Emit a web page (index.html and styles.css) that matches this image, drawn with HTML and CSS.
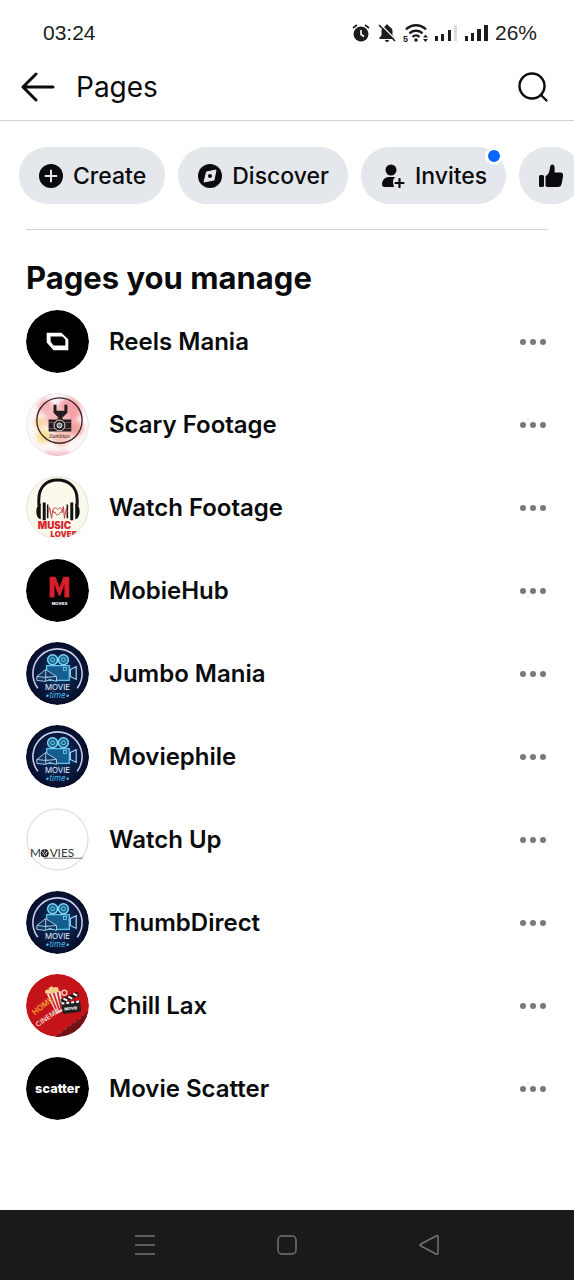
FILE: index.html
```html
<!DOCTYPE html>
<html lang="en">
<head>
    <meta charset="UTF-8">
    <meta name="viewport" content="width=device-width, initial-scale=1.0">
    <title>Pages</title>
    <link rel="stylesheet" href="styles.css">
</head>
<body>
    <svg class="sprite" aria-hidden="true">
        <defs>
            <radialGradient id="night">
                <stop offset="0" stop-color="#10426e"/>
                <stop offset="0.6" stop-color="#0a1c44"/>
                <stop offset="1" stop-color="#070d28"/>
            </radialGradient>
        </defs>
        <symbol id="dots" viewBox="0 0 28 8">
            <circle cx="4" cy="4" r="3"/><circle cx="14" cy="4" r="3"/><circle cx="24" cy="4" r="3"/>
        </symbol>
        <symbol id="movie-time" viewBox="0 0 64 64">
            <circle cx="32" cy="32" r="32" fill="url(#night)"/>
            <path d="M12 47A25 25 0 1 1 52 47" fill="none" stroke="#c9cdec" stroke-width="1.6"/>
            <rect x="21" y="24" width="23" height="15" fill="#155d8f" stroke="#62c4ee" stroke-width="1.3"/>
            <path d="M45 28l6-3v13l-6-3z" fill="#0c2850" stroke="#a9d8f2" stroke-width="1.2"/>
            <circle cx="27" cy="18" r="5" fill="#17608c" stroke="#7cd7f5" stroke-width="1.5"/>
            <circle cx="38" cy="18" r="5" fill="#17608c" stroke="#7cd7f5" stroke-width="1.5"/>
            <circle cx="27" cy="18" r="2" fill="none" stroke="#7cd7f5"/>
            <circle cx="38" cy="18" r="2" fill="none" stroke="#7cd7f5"/>
            <rect x="38" y="26" width="3" height="3" fill="none" stroke="#7cd7f5" stroke-width="0.8"/>
            <path d="M11 35l9-7 11 7v5l-7-2-4 2-9-1zM11 35l9 1 11-1M20 28v12" fill="#12375e" stroke="#a9c6e4"/>
            <text x="32" y="49" text-anchor="middle" class="art-movie">MOVIE</text>
            <text x="32" y="57" text-anchor="middle" class="art-time">•time•</text>
        </symbol>
    </svg>

    <div class="status-bar">
        <span>03:24</span>
        <div class="status-icons">
            <svg width="20" height="20" viewBox="0 0 20 20">
                <circle cx="10" cy="11" r="7.5"/>
                <path d="M2 5l4-3M18 5l-4-3" stroke="#1c1c1c" stroke-width="1.6"/>
                <path d="M10 7v4.5l3 2" fill="none" stroke="#fff" stroke-width="1.6"/>
            </svg>
            <svg width="20" height="20" viewBox="0 0 20 20">
                <path d="M10 1.5c1 0 1.5.6 1.5 1.5C14 4 15.5 6 15.5 8v4.5l2 2V16h-15v-1.5l2-2V8c0-2 1.5-4 4-5 0-.9.5-1.5 1.5-1.5zM8 17h4a2 2 0 0 1-4 0z"/>
                <path d="M3 1l16 16" stroke="#fff" stroke-width="1.5"/>
                <path d="M2 2l16 16" stroke="#1c1c1c" stroke-width="1.6"/>
            </svg>
            <svg width="26" height="20" viewBox="0 0 26 20">
                <g fill="none" stroke="#1c1c1c" stroke-width="2.4">
                    <path d="M3 6.5a14 14 0 0 1 20 0"/>
                    <path d="M6.5 10.5a9 9 0 0 1 13 0"/>
                    <path d="M9.5 14a5 5 0 0 1 7 0"/>
                </g>
                <circle cx="13" cy="17" r="1.8"/>
                <path d="M20 14.5l2.5-3 2.5 3zM20 16l2.5 3 2.5-3z"/>
                <text x="0" y="19" class="wifi-band">5</text>
            </svg>
            <svg width="24" height="20" viewBox="0 0 24 20">
                <path d="M0 13h3v5H0zM6 11h3v7H6zM13 7h3v11h-3z"/>
                <path d="M19 2h3v16h-3z" fill="#dcdcdc"/>
            </svg>
            <svg width="24" height="20" viewBox="0 0 24 20">
                <path d="M0 13h3v5H0zM6 10h3v8H6zM12 6h4v12h-4zM19 2h4v16h-4z"/>
            </svg>
            <span>26%</span>
        </div>
    </div>

    <header class="header">
        <button aria-label="Back">
            <svg width="34" height="30" viewBox="0 0 34 30">
                <path d="M15 2L2 15l13 13M2 15h30" class="line"/>
            </svg>
        </button>
        <h1>Pages</h1>
        <button class="search" aria-label="Search">
            <svg width="32" height="32" viewBox="0 0 32 32">
                <circle cx="15" cy="15" r="12.5" class="line thin"/>
                <path d="M24 24l5.5 5.5" class="line thin"/>
            </svg>
        </button>
    </header>

    <main>
        <nav class="chips">
            <button class="chip">
                <svg width="24" height="24" viewBox="0 0 24 24">
                    <circle cx="12" cy="12" r="12"/>
                    <path d="M12 6.5v11M6.5 12h11" stroke="#e4e7eb" stroke-width="2" stroke-linecap="round"/>
                </svg>
                Create
            </button>
            <button class="chip">
                <svg width="24" height="24" viewBox="0 0 24 24">
                    <circle cx="12" cy="12" r="12"/>
                    <path d="M8.5 8l9.5-2-2 10-10 2z" fill="#e4e7eb" stroke="#e4e7eb" stroke-linejoin="round"/>
                    <circle cx="12" cy="12" r="2"/>
                </svg>
                Discover
            </button>
            <button class="chip">
                <svg width="24" height="24" viewBox="0 0 24 24">
                    <circle cx="10" cy="6" r="5.5"/>
                    <path d="M8 13h4c1 0 2 .3 2.5.8-2 .5-2.5 2-2.5 4s.5 3 1 5.2H3.5C2 23 1 22 1 20.5 1 16 4 13 8 13z"/>
                    <path d="M18.5 15v8M14.5 19h8" stroke="#0a0b0d" stroke-width="2.2" stroke-linecap="round"/>
                </svg>
                Invites
                <span class="badge"></span>
            </button>
            <button class="chip" aria-label="Liked pages">
                <svg width="24" height="24" viewBox="0 0 24 24">
                    <rect x="0" y="11" width="5" height="12" rx="1.5"/>
                    <path d="M6.5 12c3-1.5 4-4 4.5-8.5.2-2 1-3 2.3-3C15.5.5 16 3 15.5 8.5H21c2.5 0 3.5 1.5 3 4l-1.3 7c-.5 2.5-1.7 3.5-4 3.5H8.5c-1.3 0-2-.7-2-2z"/>
                </svg>
            </button>
        </nav>

        <section class="managed">
            <h2>Pages you manage</h2>
            <ul class="page-list">
                <li>
                    <svg class="avatar" viewBox="0 0 64 64">
                        <circle cx="32" cy="32" r="32"/>
                        <path d="M21 23h15l7 7v11H28l-7-8zM25 27v5l3 4h12v-6l-3-3z" fill="#fff" fill-rule="evenodd"/>
                    </svg>
                    <a href="#">Reels Mania</a>
                    <button class="more" aria-label="More"><svg><use href="#dots"/></svg></button>
                </li>
                <li>
                    <svg class="avatar" viewBox="0 0 64 64">
                        <circle cx="32" cy="32" r="31.5" fill="#fdf8f8" stroke="#e4e0e0"/>
                        <g class="paint">
                            <circle cx="20" cy="14" r="8" fill="#f4b3b8"/>
                            <circle cx="44" cy="17" r="12" fill="#f3a0a6"/>
                            <circle cx="14" cy="30" r="6" fill="#f8d7a0"/>
                            <circle cx="50" cy="36" r="8" fill="#f2a5a0"/>
                            <circle cx="18" cy="44" r="7" fill="#f8dd8f"/>
                            <circle cx="36" cy="45" r="9" fill="#f7c3b3"/>
                            <circle cx="32" cy="26" r="12" fill="#f6b9bb"/>
                            <path d="M20 59q12 4 24 0v3q-12 4-24 0z" fill="#f09aa8"/>
                        </g>
                        <circle cx="34" cy="28" r="23" fill="none" stroke="#3b2528" stroke-width="1.4"/>
                        <path d="M28 12h3v6h8v-6h3v8l-4 4h-1v4h-4v-4h-1l-4-4z" fill="#241c1f"/>
                        <path d="M26 27h6v-2h5v2h9v12H23V27z" fill="#241c1f"/>
                        <path d="M23 30h23M23 36h23" stroke="#9a7779" stroke-width="0.7"/>
                        <circle cx="34" cy="33" r="5.5" fill="#241c1f" stroke="#f2dfdc"/>
                        <circle cx="34" cy="33" r="2.5" fill="#71838a" stroke="#eee"/>
                        <text x="34" y="46" text-anchor="middle" class="art-script">Zambian</text>
                    </svg>
                    <a href="#">Scary Footage</a>
                    <button class="more" aria-label="More"><svg><use href="#dots"/></svg></button>
                </li>
                <li>
                    <svg class="avatar" viewBox="0 0 64 64">
                        <circle cx="32" cy="32" r="31.5" fill="#fbf8ec" stroke="#deddd6"/>
                        <path d="M13 30V24C13 11 21 4 32 4s20 7 20 20v6" fill="none" stroke="#111" stroke-width="3"/>
                        <path d="M15 28c-6 1-6 15 0 16zM50 28c6 1 6 15 0 16zM17 27h3v18h-3zM45 27h3v18h-3z" fill="#111"/>
                        <path d="M22 43V29M42 43V29" stroke="#111" stroke-width="1.5"/>
                        <path d="M22 37h1l1-5 2 11 1-8 1 2h2M36 37h1l1-6 1 12 2-10 1 4" fill="none" stroke="#c43b42"/>
                        <path d="M32 40l-4-4c-2-3 2-5 4-2 2-3 6-1 4 2z" fill="none" stroke="#b84a50"/>
                        <text x="12" y="54" class="art-music">MUSIC</text>
                        <text x="25" y="62" class="art-lover">LOVER</text>
                    </svg>
                    <a href="#">Watch Footage</a>
                    <button class="more" aria-label="More"><svg><use href="#dots"/></svg></button>
                </li>
                <li>
                    <svg class="avatar" viewBox="0 0 64 64">
                        <circle cx="32" cy="32" r="32"/>
                        <path d="M24 39V18h6l4 11 4-11h6v21h-5V26l-4 11h-2l-4-11v13z" fill="#d71f2b"/>
                        <text x="34" y="47" text-anchor="middle" class="art-tiny">MOVIES</text>
                    </svg>
                    <a href="#">MobieHub</a>
                    <button class="more" aria-label="More"><svg><use href="#dots"/></svg></button>
                </li>
                <li>
                    <svg class="avatar"><use href="#movie-time"/></svg>
                    <a href="#">Jumbo Mania</a>
                    <button class="more" aria-label="More"><svg><use href="#dots"/></svg></button>
                </li>
                <li>
                    <svg class="avatar"><use href="#movie-time"/></svg>
                    <a href="#">Moviephile</a>
                    <button class="more" aria-label="More"><svg><use href="#dots"/></svg></button>
                </li>
                <li>
                    <svg class="avatar" viewBox="0 0 64 64">
                        <circle cx="32" cy="32" r="31" fill="#fff" stroke="#e2e2e2" stroke-width="1.5"/>
                        <text x="4" y="50" class="art-line">M</text>
                        <circle cx="19" cy="46" r="4" fill="#111"/>
                        <path d="M19 43v6M16 44.5l6 3M22 44.5l-6 3" stroke="#fff" stroke-dasharray="2 2"/>
                        <text x="24" y="50" class="art-line">VIES</text>
                        <path d="M18 51h40" stroke="#555" stroke-width="0.8"/>
                    </svg>
                    <a href="#">Watch Up</a>
                    <button class="more" aria-label="More"><svg><use href="#dots"/></svg></button>
                </li>
                <li>
                    <svg class="avatar"><use href="#movie-time"/></svg>
                    <a href="#">ThumbDirect</a>
                    <button class="more" aria-label="More"><svg><use href="#dots"/></svg></button>
                </li>
                <li>
                    <svg class="avatar" viewBox="0 0 64 64">
                        <circle cx="32" cy="32" r="32" fill="#c5131a"/>
                        <path d="M30 64l30-24c2-1 3-2 3-3a32 32 0 0 1-33 27z" fill="#701317"/>
                        <path d="M34 60l25-18" stroke="#b32a28" stroke-width="2" stroke-dasharray="3 3"/>
                        <path d="M21 20l14-3 3 20-7 4z" fill="#f5e5dc"/>
                        <path d="M24 20l8 19M28 19l6 18M32 18l4 18" stroke="#cf2628" stroke-width="1.8"/>
                        <path d="M20 20c-2-3 1-5 3-4 0-4 4-4 5-2 3-2 6 0 5 3l2 1z" fill="#f4cf86"/>
                        <circle cx="39" cy="19" r="2.5" fill="none" stroke="#f2c4bb" stroke-width="1.5"/>
                        <path d="M35 26l17-8 2 4-17 8z" fill="#1d191a"/>
                        <path d="M38 25l4 2M43 23l4 2M48 20l4 2" stroke="#fff" stroke-width="2"/>
                        <path d="M35 29l20-2 1 11-18 3z" fill="#242022"/>
                        <path d="M36 30l18-2" stroke="#fff" stroke-width="2" stroke-dasharray="3 2"/>
                        <text x="39" y="37" class="art-tiny" transform="rotate(-5 39 37)">MOVIE</text>
                        <text x="9" y="42" class="art-home" transform="rotate(-38 9 42)">HOME</text>
                        <text x="12" y="54" class="art-cinema" transform="rotate(-35 12 54)">CINEMA</text>
                    </svg>
                    <a href="#">Chill Lax</a>
                    <button class="more" aria-label="More"><svg><use href="#dots"/></svg></button>
                </li>
                <li>
                    <svg class="avatar" viewBox="0 0 64 64">
                        <circle cx="32" cy="32" r="32"/>
                        <text x="32" y="37" text-anchor="middle" class="art-scatter">scatter</text>
                    </svg>
                    <a href="#">Movie Scatter</a>
                    <button class="more" aria-label="More"><svg><use href="#dots"/></svg></button>
                </li>
            </ul>
        </section>
    </main>

    <footer class="system-nav">
        <button aria-label="Recent apps">
            <svg width="22" height="22" viewBox="0 0 22 22"><path d="M1 2h20M1 11h20M1 20h20"/></svg>
        </button>
        <button aria-label="Home">
            <svg width="22" height="22" viewBox="0 0 22 22"><rect x="2" y="2" width="18" height="18" rx="4"/></svg>
        </button>
        <button aria-label="Go back">
            <svg width="22" height="22" viewBox="0 0 22 22"><path d="M18 2L3 10q-2 1 0 2l15 8q2 1 2-1V3q0-2-2-1z"/></svg>
        </button>
    </footer>
</body>
</html>
```

FILE: styles.css
```css
* {
    box-sizing: border-box;
}

body {
    display: flex;
    flex-direction: column;
    min-height: 100vh;
    margin: 0;
    background-color: #fff;
    color: #0a0b0d;
    font-family: Inter, "Liberation Sans", sans-serif;
    overflow-x: hidden;
}

button {
    display: flex;
    align-items: center;
    padding: 0;
    border: 0;
    background: none;
    color: inherit;
    font: inherit;
    cursor: pointer;
}

svg {
    display: block;
    flex-shrink: 0;
}

.sprite {
    position: absolute;
    width: 0;
    height: 0;
}

/* Status bar */
.status-bar {
    display: flex;
    justify-content: space-between;
    align-items: center;
    height: 54px;
    padding: 12px 37px 0 43px;
    font-family: "Liberation Sans", sans-serif;
    font-size: 21px;
    line-height: 24px;
    color: #1c1c1c;
}

.status-icons {
    display: flex;
    align-items: center;
    gap: 6px;
    fill: #1c1c1c;
}

.wifi-band {
    font-size: 9px;
    font-weight: bold;
}

/* Header */
.header {
    display: flex;
    align-items: center;
    gap: 21px;
    height: 67px;
    padding: 0 25px 0 21px;
    border-bottom: 1px solid #cfd0d2;
}

.header h1 {
    margin: 0;
    font-size: 28px;
    font-weight: 400;
    line-height: 34px;
}

.search {
    margin-left: auto;
}

.line {
    fill: none;
    stroke: #0a0b0d;
    stroke-width: 3;
    stroke-linecap: round;
    stroke-linejoin: round;
}

.thin {
    stroke-width: 2.4;
}

/* Chips */
.chips {
    display: flex;
    gap: 13px;
    padding: 26px 0 25px 19px;
    overflow: hidden;
}

.chip {
    position: relative;
    flex-shrink: 0;
    gap: 10px;
    height: 57px;
    padding: 0 19px 0 20px;
    border-radius: 29px;
    background-color: #e4e7eb;
    font-size: 23px;
    font-weight: 500;
    fill: #0a0b0d;
}

.badge {
    position: absolute;
    top: 0;
    right: 3px;
    width: 18px;
    height: 18px;
    border: 3px solid #fff;
    border-radius: 50%;
    background-color: #0866ff;
}

/* Page list */
.managed {
    margin: 0 26px;
    padding-top: 28px;
    border-top: 1px solid #d3d5d8;
}

.managed h2 {
    margin: 0;
    font-size: 31px;
    font-weight: 700;
    line-height: 40px;
}

.page-list {
    margin: 0;
    padding: 2px 0 40px;
    list-style: none;
}

.page-list li {
    display: flex;
    align-items: center;
    gap: 20px;
    height: 83px;
}

.page-list a {
    flex: 1;
    color: inherit;
    font-size: 24px;
    font-weight: 600;
    text-decoration: none;
}

.avatar {
    width: 63px;
    height: 63px;
    border-radius: 50%;
}

.more {
    height: 44px;
    margin-right: 1px;
}

.more svg {
    width: 28px;
    height: 8px;
    fill: #77797c;
}

/* Avatar art */
.paint {
    filter: blur(2px);
}

.art-movie {
    font-size: 8px;
    fill: #e4efff;
}

.art-time {
    font-size: 8px;
    font-style: italic;
    fill: #48bde6;
}

.art-script {
    font-family: "Liberation Serif", serif;
    font-size: 6px;
    font-style: italic;
    fill: #3b2528;
}

.art-music {
    font-size: 10px;
    font-weight: 900;
    fill: #d9262e;
}

.art-lover {
    font-size: 8px;
    font-weight: 900;
    fill: #d9262e;
}

.art-tiny {
    font-size: 4px;
    font-weight: 800;
    fill: #fff;
}

.art-line {
    font-family: Lato, sans-serif;
    font-size: 12px;
    fill: #333;
}

.art-home {
    font-size: 8px;
    font-weight: 600;
    fill: #f0a030;
}

.art-cinema {
    font-size: 7px;
    font-weight: 600;
    fill: #f5d9cf;
}

.art-scatter {
    font-size: 13px;
    font-weight: 800;
    fill: #fff;
}

/* System navigation */
.system-nav {
    display: flex;
    justify-content: space-around;
    align-items: center;
    height: 70px;
    margin-top: auto;
    padding: 0 74px;
    background-color: #1a1a1a;
}

.system-nav svg {
    fill: none;
    stroke: #737373;
    stroke-width: 1.5;
}
```
